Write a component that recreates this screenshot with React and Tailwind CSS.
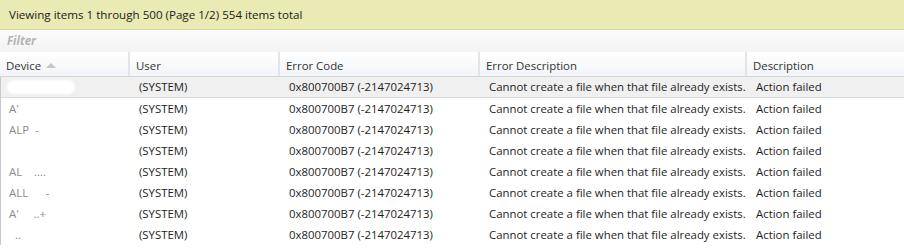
import React from "react";

const columns = [
  { key: "device", label: "Device", width: "w-[128px]" },
  { key: "user", label: "User", width: "w-[150px]" },
  { key: "code", label: "Error Code", width: "w-[200px]" },
  { key: "errDesc", label: "Error Description", width: "w-[267px]" },
  { key: "desc", label: "Description", width: "flex-1" },
];

// device names are redacted in the source, only fragments remain
const devices = ["", "A'", "ALP  -", "", "AL    ....", "ALL      -", "A'     ..+", "  .."];

const rows = devices.map((d) => ({
  device: d,
  user: "(SYSTEM)",
  code: "0x800700B7 (-2147024713)",
  errDesc: "Cannot create a file when that file already exists.",
  desc: "Action failed",
}));

export default function App() {
  return (
    <div className="w-[904px] h-[250px] overflow-hidden bg-white text-[11.4px] text-[#1e1e1e] font-['Open_Sans','Noto_Sans',sans-serif]">
      {/* status bar */}
      <div className="h-[30px] flex items-center pl-[9px] bg-[#e9eab4] border-b border-[#d7d99c] text-[11.6px] text-[#222]">
        Viewing items 1 through 500 (Page 1/2) 554 items total
      </div>

      {/* filter row */}
      <div className="h-[22px] flex items-center pl-[7px] bg-gradient-to-b from-[#fbfbfb] to-[#f3f3f3]">
        <span className="italic font-bold text-[11.5px] text-[#b4b4b4]">Filter</span>
      </div>

      {/* header */}
      <div className="flex h-[25px] bg-gradient-to-b from-white to-[#f1f4f8] border-b border-[#d5d5d5]">
        {columns.map((c, i) => (
          <div
            key={c.key}
            className={`${c.width} flex items-center pl-[6px] pt-[4px] ${i > 0 ? "border-l-2 border-[#e2e4e7]" : ""}`}
          >
            <span className="text-[#333]">{c.label}</span>
            {c.key === "device" && (
              <svg width="10" height="6" viewBox="0 0 10 6" className="ml-[5px] mb-[2px]">
                <polygon points="0,6 5,1 10,6" fill="#c4c8cc" />
              </svg>
            )}
          </div>
        ))}
      </div>

      {/* rows */}
      <div className="border-l border-[#c8c8c8]">
        {rows.map((r, idx) => (
          <div
            key={idx}
            className={`flex h-[21px] items-center ${idx === 0 ? "bg-[#f0f0f0] border-b border-[#dcdcdc]" : ""}`}
          >
            <div className="w-[128px] pl-[8px] relative h-full flex items-center text-[#8a8a8a]">
              {idx === 0 ? (
                <span className="absolute left-[6px] top-[3px] w-[68px] h-[14px] rounded-full bg-white blur-[1px]" />
              ) : (
                <span className="whitespace-pre">{r.device}</span>
              )}
            </div>
            <div className="w-[150px] pl-[10px]">{r.user}</div>
            <div className="w-[200px] pl-[10px]">{r.code}</div>
            <div className="w-[267px] pl-[10px] whitespace-nowrap">{r.errDesc}</div>
            <div className="flex-1 pl-[10px]">{r.desc}</div>
          </div>
        ))}
      </div>
    </div>
  );
}
